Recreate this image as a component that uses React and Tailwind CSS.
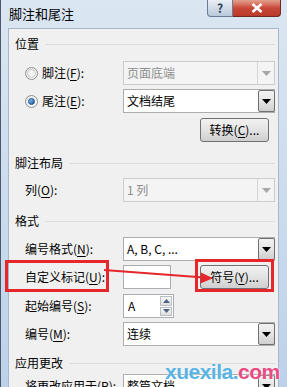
const Key = ({ children }) => <span className="underline underline-offset-2">{children}</span>;

const Arrow = ({ disabled }) => (
  <svg width="9" height="5" viewBox="0 0 9 5">
    <path d="M0 0H9L4.5 5Z" fill={disabled ? '#a7a7a7' : '#000'} />
  </svg>
);

const Select = ({ value, disabled }) => (
  <div
    className={`flex-1 h-[24px] flex items-center border ${
      disabled ? 'bg-[#f4f4f4] border-[#c9cdd1] text-[#8d8d8d]' : 'bg-white border-[#abadb3] text-black'
    }`}
  >
    <span className="flex-1 pl-[3px] whitespace-nowrap leading-[16px]">{value}</span>
    <div
      className={`w-[17px] h-full flex items-center justify-center border-l ${
        disabled
          ? 'border-[#d5d5d5] bg-[#f4f4f4]'
          : 'border-[#707070] rounded-[2px] border bg-gradient-to-b from-[#f2f2f2] via-[#e5e5e5] to-[#cfcfcf] -my-px -mr-px h-[24px]'
      }`}
    >
      <Arrow disabled={disabled} />
    </div>
  </div>
);

const Button = ({ children, className = '' }) => (
  <div
    className={`h-[24px] flex items-center justify-center border border-[#707070] rounded-[3px] bg-gradient-to-b from-[#f2f2f2] via-[#e3e3e3] to-[#cfcfcf] text-black leading-[16px] ${className}`}
  >
    {children}
  </div>
);

const Heading = ({ children, className = '' }) => (
  <div className={`flex items-center pl-[6px] pr-[3px] ${className}`}>
    <span className="text-black leading-[16px]">{children}</span>
    <div className="flex-1 h-px bg-[#dcdcdc] ml-[6px]" />
  </div>
);

const Radio = ({ checked }) => (
  <div className="w-[13px] h-[13px] rounded-full border border-[#8e8f8f] bg-gradient-to-br from-[#e6e6e6] to-[#ffffff] flex items-center justify-center">
    {checked ? (
      <div className="w-[7px] h-[7px] rounded-full bg-gradient-to-br from-[#8fc4f0] to-[#1d5a9c] border border-[#1b4f88]" />
    ) : (
      <div className="w-[9px] h-[9px] rounded-full border border-[#c9c9c9] bg-[#f3f3f3]" />
    )}
  </div>
);

const Row = ({ label, children, className = '' }) => (
  <div className={`flex items-center pl-[16px] pr-[3px] h-[24px] ${className}`}>
    <div className="w-[98px] shrink-0 whitespace-nowrap leading-[16px]">{label}</div>
    {children}
  </div>
);

export default function App() {
  return (
    <div className="relative w-[287px] h-[387px] overflow-hidden bg-gradient-to-b from-[#dbe6f2] to-[#bcd2ea] font-['Noto_Sans_CJK_SC',sans-serif] text-[12px] leading-none">
      {/* title bar */}
      <div className="h-[28px] flex items-start border-l border-[#4a5a6c]">
        <div className="pl-[8px] pt-[6px] text-[13px] leading-[16px] text-black flex-1">脚注和尾注</div>
        <div className="flex mr-[6px]">
          <div className="w-[26px] h-[17px] rounded-bl-[4px] border border-t-0 border-[#6b7d92] bg-gradient-to-b from-[#e9eff6] to-[#b9c9da] flex items-center justify-center text-[#2c3e52] font-bold text-[12px]">
            ?
          </div>
          <div className="w-[48px] h-[17px] rounded-br-[4px] border border-l-0 border-t-0 border-[#6e2a22] bg-gradient-to-b from-[#e3a08f] via-[#c9473a] to-[#b93a2b] flex items-center justify-center">
            <svg width="12" height="10" viewBox="0 0 12 10">
              <path d="M1.5 1L10.5 9M10.5 1L1.5 9" stroke="#fff" strokeWidth="2.6" />
            </svg>
          </div>
        </div>
      </div>

      {/* client area */}
      <div className="flex h-[359px] border-l border-[#4a5a6c]">
        <div className="w-[7px]" />
        <div className="w-[271px] bg-[#f0f0f0] border-t border-l border-r border-[#a9b8c9] pt-[3px] text-black">
          <Heading className="h-[24px]">位置</Heading>

          <div className="flex items-center pl-[16px] pr-[3px] h-[24px] mt-[5px]">
            <div className="w-[98px] shrink-0 flex items-center">
              <Radio />
              <span className="ml-[4px] leading-[16px]">
                脚注(<Key>F</Key>):
              </span>
            </div>
            <Select value="页面底端" disabled />
          </div>

          <div className="flex items-center pl-[16px] pr-[3px] h-[24px] mt-[4px]">
            <div className="w-[98px] shrink-0 flex items-center">
              <Radio checked />
              <span className="ml-[4px] leading-[16px]">
                尾注(<Key>E</Key>):
              </span>
            </div>
            <Select value="文档结尾" />
          </div>

          <div className="flex justify-end pr-[9px] mt-[5px]">
            <Button className="w-[69px]">
              转换(<Key>C</Key>)...
            </Button>
          </div>

          <Heading className="h-[24px] mt-[9px]">脚注布局</Heading>

          <Row label={<span>列(<Key>O</Key>):</span>} className="mt-[3px]">
            <Select value="1 列" disabled />
          </Row>

          <Heading className="h-[24px] mt-[7px]">格式</Heading>

          <Row label={<span>编号格式(<Key>N</Key>):</span>} className="mt-[4px]">
            <Select value="A, B, C, ..." />
          </Row>

          <Row label={<span>自定义标记(<Key>U</Key>):</span>} className="mt-[4px]">
            <div className="w-[48px] h-[24px] bg-white border border-[#abadb3]" />
            <Button className="w-[69px] ml-[29px]">
              符号(<Key>Y</Key>)...
            </Button>
          </Row>

          <Row label={<span>起始编号(<Key>S</Key>):</span>} className="mt-[5px]">
            <div className="w-[51px] h-[24px] bg-white border border-[#abadb3] flex items-center">
              <span className="flex-1 pl-[4px] leading-[16px]">A</span>
              <div className="w-[14px] h-full flex flex-col gap-px p-px">
                <div className="flex-1 border border-[#b9bec5] bg-gradient-to-b from-[#f6f6f6] to-[#e0e0e0] flex items-center justify-center">
                  <svg width="7" height="4" viewBox="0 0 7 4"><path d="M0 4H7L3.5 0Z" fill="#4d6185" /></svg>
                </div>
                <div className="flex-1 border border-[#b9bec5] bg-gradient-to-b from-[#f6f6f6] to-[#e0e0e0] flex items-center justify-center">
                  <svg width="7" height="4" viewBox="0 0 7 4"><path d="M0 0H7L3.5 4Z" fill="#4d6185" /></svg>
                </div>
              </div>
            </div>
          </Row>

          <Row label={<span>编号(<Key>M</Key>):</span>} className="mt-[4px]">
            <Select value="连续" />
          </Row>

          <Heading className="h-[20px] mt-[7px]">应用更改</Heading>

          <Row label={<span>将更改应用于(<Key>P</Key>):</span>} className="mt-[1px]">
            <Select value="整篇文档" />
          </Row>
        </div>
      </div>

      {/* annotations */}
      <div className="absolute left-[5px] top-[260px] w-[104px] h-[32px] border-[3px] border-[#e5262b]" />
      <div className="absolute left-[195px] top-[259px] w-[79px] h-[33px] border-[3px] border-[#e5262b]" />
      <svg className="absolute left-0 top-0" width="287" height="387" viewBox="0 0 287 387">
        <line x1="104" y1="270" x2="204" y2="277.5" stroke="#e5262b" strokeWidth="2" />
        <path d="M213 278.2L201 272.5L200.3 283.5Z" fill="#e5262b" />
      </svg>

      <div className="absolute left-[165px] top-[361px] font-['Liberation_Sans',sans-serif] font-bold text-[21px] leading-none tracking-[-0.5px] [text-shadow:0_0_2px_#fff]">
        <span className="text-[#5ab4e2]">xuexila.</span>
        <span className="text-[#ea4b82]">com</span>
      </div>
    </div>
  );
}
